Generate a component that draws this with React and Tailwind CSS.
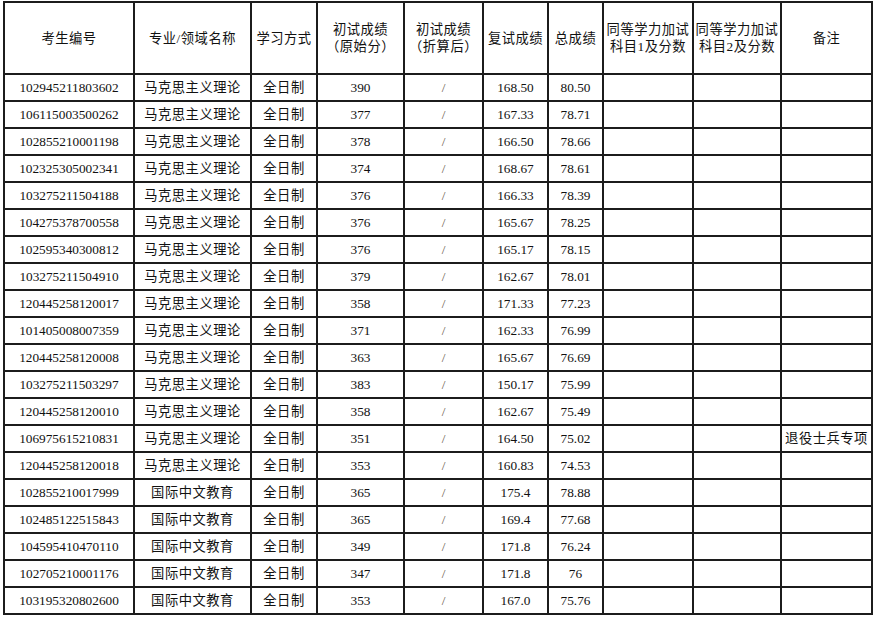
const ROWS = [
  ['102945211803602', '马克思主义理论', '390', '168.50', '80.50', ''],
  ['106115003500262', '马克思主义理论', '377', '167.33', '78.71', ''],
  ['102855210001198', '马克思主义理论', '378', '166.50', '78.66', ''],
  ['102325305002341', '马克思主义理论', '374', '168.67', '78.61', ''],
  ['103275211504188', '马克思主义理论', '376', '166.33', '78.39', ''],
  ['104275378700558', '马克思主义理论', '376', '165.67', '78.25', ''],
  ['102595340300812', '马克思主义理论', '376', '165.17', '78.15', ''],
  ['103275211504910', '马克思主义理论', '379', '162.67', '78.01', ''],
  ['120445258120017', '马克思主义理论', '358', '171.33', '77.23', ''],
  ['101405008007359', '马克思主义理论', '371', '162.33', '76.99', ''],
  ['120445258120008', '马克思主义理论', '363', '165.67', '76.69', ''],
  ['103275211503297', '马克思主义理论', '383', '150.17', '75.99', ''],
  ['120445258120010', '马克思主义理论', '358', '162.67', '75.49', ''],
  ['106975615210831', '马克思主义理论', '351', '164.50', '75.02', '退役士兵专项'],
  ['120445258120018', '马克思主义理论', '353', '160.83', '74.53', ''],
  ['102855210017999', '国际中文教育', '365', '175.4', '78.88', ''],
  ['102485122515843', '国际中文教育', '365', '169.4', '77.68', ''],
  ['104595410470110', '国际中文教育', '349', '171.8', '76.24', ''],
  ['102705210001176', '国际中文教育', '347', '171.8', '76', ''],
  ['103195320802600', '国际中文教育', '353', '167.0', '75.76', ''],
]

const WIDTHS = [130, 117, 66, 87, 79, 65, 55, 90, 88, 91]

const cell = 'border-2 border-[#1c1c1c] p-0 text-center align-middle'

export default function App() {
  return (
    <div className="bg-white w-[880px] h-[619px] pt-px pl-[3px]" style={{ fontFamily: '"Liberation Serif", "Noto Sans CJK SC", serif' }}>
      <table className="table-fixed border-collapse text-[13.3px] text-[#111] leading-[17px] w-[870px]">
        <colgroup>
          {WIDTHS.map((w, i) => <col key={i} style={{ width: w }} />)}
        </colgroup>
        <thead>
          <tr className="h-[72px]">
            <th className={`${cell} font-normal tracking-[0.5px]`}>考生编号</th>
            <th className={`${cell} font-normal tracking-[0.5px]`}>专业/领域名称</th>
            <th className={`${cell} font-normal tracking-[0.5px]`}>学习方式</th>
            <th className={`${cell} font-normal tracking-[0.5px]`}>初试成绩<br />（原始分）</th>
            <th className={`${cell} font-normal tracking-[0.5px]`}>初试成绩<br />（折算后）</th>
            <th className={`${cell} font-normal tracking-[0.5px]`}>复试成绩</th>
            <th className={`${cell} font-normal tracking-[0.5px]`}>总成绩</th>
            <th className={`${cell} font-normal tracking-[0.5px]`}>同等学力加试<br />科目1及分数</th>
            <th className={`${cell} font-normal tracking-[0.5px]`}>同等学力加试<br />科目2及分数</th>
            <th className={`${cell} font-normal tracking-[0.5px]`}>备注</th>
          </tr>
        </thead>
        <tbody>
          {ROWS.map(r => (
            <tr key={r[0]} className="h-[27px]">
              <td className={cell}>{r[0]}</td>
              <td className={`${cell} tracking-[0.5px]`}>{r[1]}</td>
              <td className={`${cell} tracking-[0.5px]`}>全日制</td>
              <td className={cell}>{r[2]}</td>
              <td className={`${cell} text-[#6b5a4a]`}>/</td>
              <td className={cell}>{r[3]}</td>
              <td className={cell}>{r[4]}</td>
              <td className={cell}></td>
              <td className={cell}></td>
              <td className={`${cell} tracking-[0.5px]`}>{r[5]}</td>
            </tr>
          ))}
        </tbody>
      </table>
    </div>
  )
}
